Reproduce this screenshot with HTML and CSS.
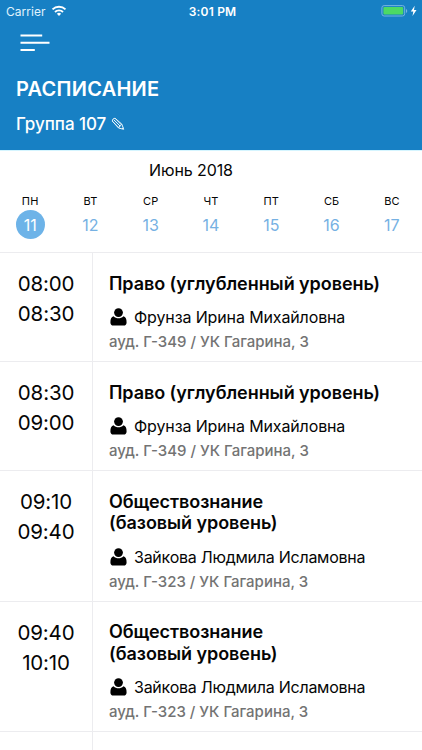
FILE: index.html
```html
<!DOCTYPE html>
<html lang="ru">
<head>
<meta charset="utf-8">
<meta name="viewport" content="width=device-width, initial-scale=1">
<title>Расписание</title>
<link rel="stylesheet" href="styles.css">
</head>
<body>
<svg class="defs" width="0" height="0" aria-hidden="true">
  <symbol id="user" viewBox="0 0 17 18">
    <path d="M3.600 8.200C1.300 8.600.4 11 .4 14.400C.4 16.400 1.600 17.500 3.200 17.500H13.800C15.400 17.500 16.600 16.400 16.600 14.400C16.600 11 15.700 8.600 13.400 8.200C10.900 10.900 6.100 10.900 3.600 8.200Z"/>
    <circle cx="8.500" cy="4.600" r="4.400"/>
  </symbol>
</svg>
<header class="header">
  <div class="status">
    <div class="carrier"><span>Carrier</span>
      <svg width="16" height="12" viewBox="0 0 16 12"><g fill="none" stroke="#fff" stroke-width="1.900"><path d="M1.500 4.400a9.300 9.300 0 0 1 13 0"/><path d="M4 7a5.700 5.700 0 0 1 8 0"/></g><path fill="#fff" d="M5.900 8.700a3 3 0 0 1 4.200 0L8 10.900z"/></svg>
    </div>
    <div class="clock">3:01 PM</div>
    <div class="power">
      <svg width="37" height="12" viewBox="0 0 37 12"><rect x=".9" y=".6" width="22.800" height="10.400" rx="2.200" fill="none" stroke="#75b4df"/><rect x="2.400" y="2.100" width="19.800" height="7.400" rx="1" fill="#4cd964"/><path d="M25 4v4c1.700-.7 1.700-3.300 0-4z" fill="#75b4df"/><path d="M33.700.8 29.800 6.400h2.500l-.8 4.500 4-5.900h-2.500z" fill="#fff"/></svg>
    </div>
  </div>
  <svg class="menu" width="30" height="18" viewBox="0 0 30 18"><path d="M.5 1.500h21.700M.5 8.700h29M.5 15.900h14.300" fill="none" stroke="#fff" stroke-width="2"/></svg>
  <h1 class="title">РАСПИСАНИЕ</h1>
  <div class="group"><span>Группа 107</span>
    <svg width="14" height="14" viewBox="0 0 14 14" fill="none" stroke="#e8f5fc" stroke-width="1"><path d="M1.400 4.200C1.200 2.500 2.300 1.200 4.100 1.300L10.800 7.100L12.700 12.300L7.500 11ZM2.700 2.700l6.600 6.600M4.100 1.300l6.100 6.300M1.400 4.200l6.400 6.400M7.500 11l1.300-2 2-1.900M11 12l1.200-1.100"/></svg>
  </div>
</header>
<section class="calendar">
  <div class="month">Июнь 2018</div>
  <div class="week">
    <div class="day active"><span class="name">ПН</span><span class="num">11</span></div>
    <div class="day"><span class="name">ВТ</span><span class="num">12</span></div>
    <div class="day"><span class="name">СР</span><span class="num">13</span></div>
    <div class="day"><span class="name">ЧТ</span><span class="num">14</span></div>
    <div class="day"><span class="name">ПТ</span><span class="num">15</span></div>
    <div class="day"><span class="name">СБ</span><span class="num">16</span></div>
    <div class="day"><span class="name">ВС</span><span class="num">17</span></div>
  </div>
</section>
<main class="lessons">
  <article class="lesson">
    <div class="time"><span>08:00</span><span>08:30</span></div>
    <div class="info">
      <h2 class="subject">Право (углубленный уровень)</h2>
      <div class="teacher"><svg class="user"><use href="#user"/></svg><span>Фрунза Ирина Михайловна</span></div>
      <div class="room">ауд. Г-349 / УК Гагарина, 3</div>
    </div>
  </article>
  <article class="lesson">
    <div class="time"><span>08:30</span><span>09:00</span></div>
    <div class="info">
      <h2 class="subject">Право (углубленный уровень)</h2>
      <div class="teacher"><svg class="user"><use href="#user"/></svg><span>Фрунза Ирина Михайловна</span></div>
      <div class="room">ауд. Г-349 / УК Гагарина, 3</div>
    </div>
  </article>
  <article class="lesson">
    <div class="time"><span>09:10</span><span>09:40</span></div>
    <div class="info">
      <h2 class="subject">Обществознание<br>(базовый уровень)</h2>
      <div class="teacher long"><svg class="user"><use href="#user"/></svg><span>Зайкова Людмила Исламовна</span></div>
      <div class="room">ауд. Г-323 / УК Гагарина, 3</div>
    </div>
  </article>
  <article class="lesson">
    <div class="time"><span>09:40</span><span>10:10</span></div>
    <div class="info">
      <h2 class="subject">Обществознание<br>(базовый уровень)</h2>
      <div class="teacher long"><svg class="user"><use href="#user"/></svg><span>Зайкова Людмила Исламовна</span></div>
      <div class="room">ауд. Г-323 / УК Гагарина, 3</div>
    </div>
  </article>
  <div class="lesson rest">
    <div class="time"></div>
  </div>
</main>
</body>
</html>
```
FILE: styles.css
```css
* { box-sizing: border-box; }
body { display: flex; flex-direction: column; height: 750px; margin: 0; background: #fff; color: #050505; font-family: Inter, "Noto Sans", sans-serif; }
svg { display: block; flex: none; }
.defs { display: none; }
h1, h2 { margin: 0; }

.header { flex: none; height: 150px; background: #1780c4; color: #fff; }
.status { display: grid; grid-template-columns: 1fr auto 1fr; align-items: center; height: 22px; padding: 0 4px 0 6px; }
.carrier { display: flex; align-items: center; gap: 5px; font-size: 12px; letter-spacing: .05px; color: #e0f3fc; }
.clock { padding-left: 1px; font-size: 12px; font-weight: 600; letter-spacing: .2px; }
.power { display: flex; justify-content: flex-end; }
.menu { margin: 12px 0 0 20px; }
.title { margin: 24px 0 0 16px; font-size: 20px; line-height: 26px; font-weight: 600; letter-spacing: .25px; }
.group { display: flex; align-items: center; gap: 5px; margin: 10px 0 0 16px; font-size: 17px; line-height: 24px; font-weight: 500; letter-spacing: -.05px; }

.calendar { flex: none; height: 102px; border-top: 1px solid #d5f5ff; }
.month { padding-top: 7px; margin-right: 40px; text-align: center; font-size: 16px; line-height: 24px; letter-spacing: -.1px; }
.week { display: grid; grid-template-columns: repeat(7, 1fr); padding-top: 12px; }
.day { display: flex; flex-direction: column; align-items: center; }
.name { font-size: 11px; line-height: 14px; letter-spacing: .1px; }
.num { display: flex; align-items: center; justify-content: center; width: 29px; height: 29px; margin-top: 2px; border-radius: 50%; font-size: 16px; color: #76b1e3; }
.active .num { background: #6db3e8; color: #fff; }

.lessons { flex: 1; display: flex; flex-direction: column; min-height: 0; }
.lesson { flex: none; display: flex; border-top: 1px solid #ececef; }
.rest { flex: 1; }
.time { display: flex; flex-direction: column; align-items: center; width: 93px; padding-top: 16.400px; border-right: 1px solid #ececef; font-size: 20.500px; line-height: 29.500px; letter-spacing: -.15px; }
.rest .time { padding: 0; }
.info { flex: 1; padding: 19.500px 0 8px 16px; }
.subject { font-size: 18px; line-height: 21.700px; font-weight: 600; letter-spacing: -.06px; }
.teacher { display: flex; align-items: center; gap: 7px; margin-top: 10.800px; padding-left: 1px; font-size: 16px; line-height: 24px; letter-spacing: -.13px; }
.long { letter-spacing: -.25px; }
.user { width: 17px; height: 18px; fill: #000; }
.room { margin-top: 1px; font-size: 15px; line-height: 23px; font-weight: 500; color: #737373; }
```
